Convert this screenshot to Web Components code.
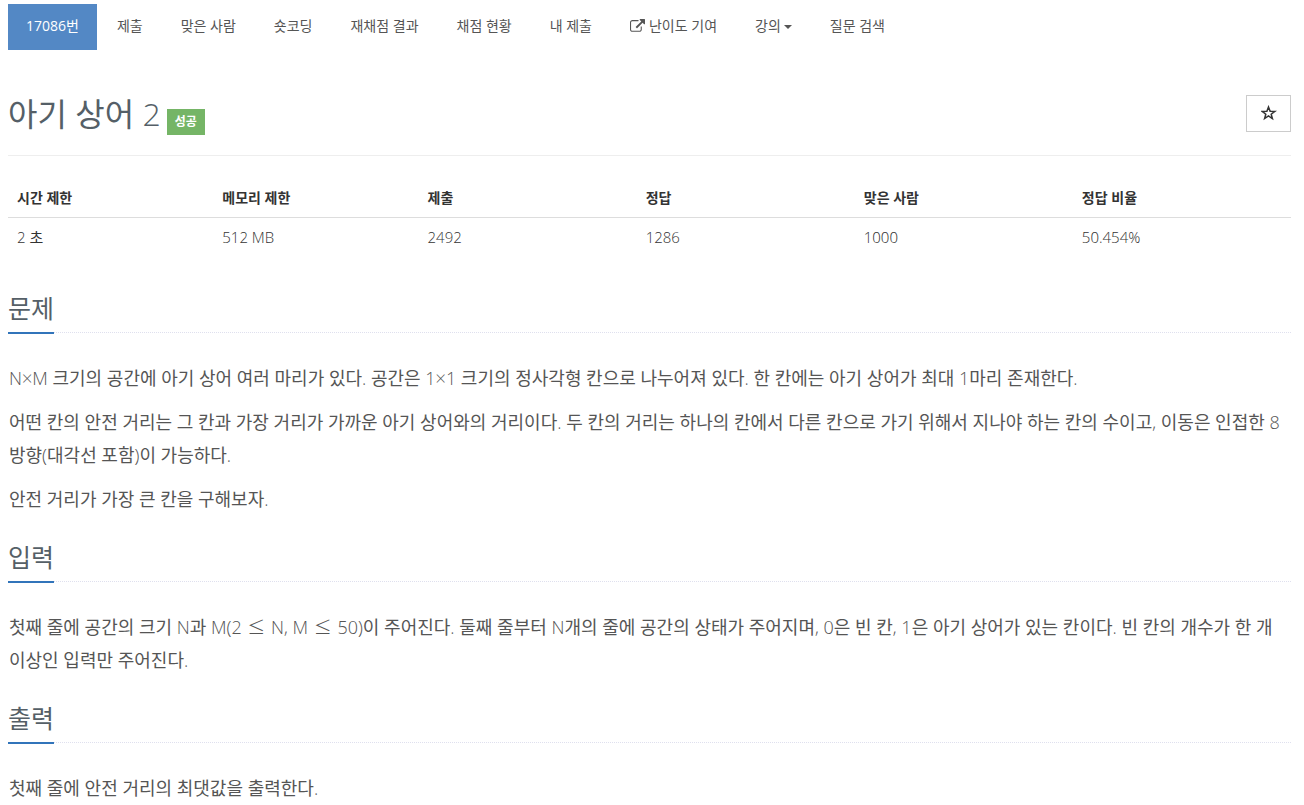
<!DOCTYPE html>
<html lang="ko">
<head>
<meta charset="utf-8">
<meta name="viewport" content="width=device-width, initial-scale=1">
<title>17086번: 아기 상어 2</title>
<style>
  body {
    margin: 0;
    padding: 4px 13px 0 8px;
    background: #fff;
    color: #333;
    font-family: "Open Sans", "Noto Sans CJK KR", sans-serif;
    --light: "Open Sans Light", "Open Sans", "Noto Sans CJK KR", sans-serif;
    font-size: 14px;
    line-height: 22px;
  }
  .math { margin: 0 1px; font-family: "Noto Sans CJK KR", sans-serif; font-weight: 300; line-height: 1; }
  .phrase { white-space: nowrap; }
</style>
</head>
<body>
<problem-page>
  <problem-nav slot="nav">
    <nav-item active>17086번</nav-item>
    <nav-item>제출</nav-item>
    <nav-item>맞은 사람</nav-item>
    <nav-item>숏코딩</nav-item>
    <nav-item>재채점 결과</nav-item>
    <nav-item>채점 현황</nav-item>
    <nav-item>내 제출</nav-item>
    <nav-item external>난이도 기여</nav-item>
    <nav-item menu>강의</nav-item>
    <nav-item>질문 검색</nav-item>
  </problem-nav>
  <problem-title slot="title">아기 상어 2<span slot="label">성공</span></problem-title>
  <problem-info slot="info" time="2 초" memory="512 MB" submit="2492" accepted="1286" people="1000" ratio="50.454%"></problem-info>
  <problem-section heading="문제">
    <problem-text>N×M 크기의 공간에 아기 상어 여러 마리가 있다. 공간은 1×1 크기의 정사각형 칸으로 나누어져 있다. 한 칸에는 아기 상어가 최대 1마리 존재한다.</problem-text>
    <problem-text>어떤 칸의 안전 거리는 그 칸과 가장 거리가 가까운 아기 상어와의 거리이다. 두 칸의 거리는 하나의 칸에서 다른 칸으로 가기 위해서 지나야 하는 칸의 수이고, 이동은 인접한 8방향(대각선 포함)이 가능하다.</problem-text>
    <problem-text>안전 거리가 가장 큰 칸을 구해보자.</problem-text>
  </problem-section>
  <problem-section heading="입력">
    <problem-text>첫째 줄에 공간의 크기 N과 M(2 <span class="math">≤</span> N, M <span class="math">≤</span> 50)이 주어진다. 둘째 줄부터 N개의 줄에 공간의 상태가 주어지며, 0은 빈 칸, 1은 아기 상어가 있는 칸이다. 빈 칸의 개수가 한 개 <span class="phrase">이상인 입력만 주어진다.</span></problem-text>
  </problem-section>
  <problem-section heading="출력">
    <problem-text>첫째 줄에 안전 거리의 최댓값을 출력한다.</problem-text>
  </problem-section>
</problem-page>

<script>
  class BaseElement extends HTMLElement {
    connectedCallback() {
      if (this.shadowRoot) return;
      this.attachShadow({ mode: "open" }).innerHTML = this.render();
    }
  }

  customElements.define("problem-page", class extends BaseElement {
    render() {
      return `
        <style>
          :host { display: block; }
        </style>
        <slot name="nav"></slot>
        <main>
          <slot name="title"></slot>
          <slot name="info"></slot>
          <slot></slot>
        </main>`;
    }
  });

  customElements.define("problem-nav", class extends BaseElement {
    render() {
      return `
        <style>
          :host { display: block; }
          nav { display: flex; flex-wrap: wrap; gap: 2px; }
        </style>
        <nav aria-label="문제 메뉴"><slot></slot></nav>`;
    }
  });

  customElements.define("nav-item", class extends BaseElement {
    render() {
      const icon = this.hasAttribute("external") ? `
        <svg width="15" height="15" viewBox="0 0 1792 1792" aria-hidden="true"><path fill="currentColor" d="M1408 928v320q0 119-84.500 203.500t-203.500 84.500h-832q-119 0-203.500-84.500t-84.500-203.500v-832q0-119 84.500-203.500t203.500-84.500h704q14 0 23 9t9 23v64q0 14-9 23t-23 9h-704q-66 0-113 47t-47 113v832q0 66 47 113t113 47h832q66 0 113-47t47-113v-320q0-14 9-23t23-9h64q14 0 23 9t9 23zm384-864v512q0 26-19 45t-45 19-45-19l-176-176-652 652q-10 10-23 10t-23-10l-114-114q-10-10-10-23t10-23l652-652-176-176q-19-19-19-45t19-45 45-19h512q26 0 45 19t19 45z"/></svg>` : "";
      const caret = this.hasAttribute("menu") ? `<i class="caret"></i>` : "";
      return `
        <style>
          :host { display: block; }
          a {
            display: flex; align-items: center; padding: 11px 18px 13px;
            color: #555; text-decoration: none; white-space: nowrap;
          }
          a:hover { background: #eee; }
          :host([active]) a { background: #5388c5; color: #fff; }
          svg { margin-right: 4px; overflow: visible; }
          .caret {
            margin: 2px 0 0 3px;
            border: 4px solid transparent; border-top-color: currentColor; border-bottom: 0;
          }
        </style>
        <a href="#">${icon}<slot></slot>${caret}</a>`;
    }
  });

  customElements.define("problem-title", class extends BaseElement {
    render() {
      return `
        <style>
          :host { display: block; }
          header {
            display: flex; justify-content: space-between; align-items: center;
            margin-top: 35px; padding-bottom: 14px; border-bottom: 1px solid #eee;
          }
          .name { display: flex; align-items: baseline; gap: 6px; }
          h1 { margin: 0; padding-top: 2px; font-family: var(--light); font-size: 32px; line-height: 54px; font-weight: 400; color: #555f67; }
          .label {
            padding: 2px 8px; background: #75b566; color: #fff;
            font-size: 12px; line-height: 22px; font-weight: 700;
          }
          button {
            width: 45px; height: 37px; margin: 0; padding: 0;
            display: grid; place-items: center;
            border: 1px solid #ccc; background: #fff; color: #333;
          }
        </style>
        <header>
          <div class="name"><h1><slot></slot></h1><span class="label"><slot name="label"></slot></span></div>
          <button type="button" aria-label="즐겨찾기">
            <svg width="16" height="16" viewBox="0 0 16 16" aria-hidden="true"><path fill="none" stroke="currentColor" stroke-width="1.500" d="M7.500 2 L9.100 6.300 L14 6.400 L10.200 9.200 L11.400 13.600 L7.500 11 L3.600 13.600 L4.800 9.200 L1 6.400 L5.900 6.300 Z"/></svg>
          </button>
        </header>`;
    }
  });

  customElements.define("problem-info", class extends BaseElement {
    render() {
      const v = name => this.getAttribute(name);
      return `
        <style>
          :host { display: block; margin-top: 23px; }
          table { width: 100%; border-collapse: collapse; table-layout: fixed; }
          col { width: 17%; }
          col.limit { width: 16%; }
          th, td { padding: 8px 9px; text-align: left; line-height: 22px; }
          th { border-bottom: 1px solid #ddd; font-weight: 700; }
          td { font-family: var(--light); font-size: 15px; }
        </style>
        <table>
          <colgroup><col class="limit"><col class="limit"><col><col><col><col></colgroup>
          <thead><tr><th>시간 제한</th><th>메모리 제한</th><th>제출</th><th>정답</th><th>맞은 사람</th><th>정답 비율</th></tr></thead>
          <tbody><tr><td>${v("time")}</td><td>${v("memory")}</td><td>${v("submit")}</td><td>${v("accepted")}</td><td>${v("people")}</td><td>${v("ratio")}</td></tr></tbody>
        </table>`;
    }
  });

  customElements.define("problem-section", class extends BaseElement {
    render() {
      return `
        <style>
          :host { display: block; padding-top: 24px; }
          :host(:first-of-type) { padding-top: 35px; }
          .headline { display: flex; border-bottom: 1px dotted #dfe0ee; margin-bottom: 29px; }
          h2 {
            margin: 0 0 -2px; padding-bottom: 7px; border-bottom: 2px solid #3174ba;
            font-family: var(--light); font-size: 25px; line-height: 34px; font-weight: 400; color: #555f67;
          }
          .body { display: grid; gap: 11px; }
        </style>
        <section>
          <div class="headline"><h2>${this.getAttribute("heading")}</h2></div>
          <div class="body"><slot></slot></div>
        </section>`;
    }
  });

  customElements.define("problem-text", class extends BaseElement {
    render() {
      return `
        <style>
          :host { display: block; }
          p { margin: 0; padding: 0 1px; font-family: var(--light); font-size: 18px; line-height: 33px; color: #555; }
        </style>
        <p><slot></slot></p>`;
    }
  });
</script>
</body>
</html>
